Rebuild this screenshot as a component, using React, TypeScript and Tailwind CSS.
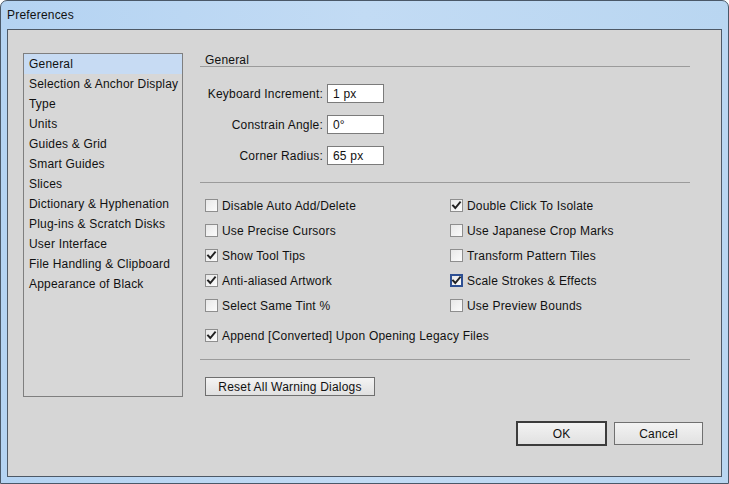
import React from "react";

const sidebarItems = [
  "General",
  "Selection & Anchor Display",
  "Type",
  "Units",
  "Guides & Grid",
  "Smart Guides",
  "Slices",
  "Dictionary & Hyphenation",
  "Plug-ins & Scratch Disks",
  "User Interface",
  "File Handling & Clipboard",
  "Appearance of Black",
];

function Check({ checked, focused }: { checked?: boolean; focused?: boolean }) {
  return (
    <span
      className={
        "flex h-[13px] w-[13px] shrink-0 items-center justify-center bg-gradient-to-br from-[#e8e8e8] to-[#fbfbfb] " +
        (focused ? "border-2 border-[#2d4f93]" : "border border-[#8e8e8e]")
      }
    >
      {checked && (
        <svg width="11" height="11" viewBox="0 0 11 11" className={focused ? "-m-[1px]" : ""}>
          <path d="M2 5.5 L4.3 8 L9 2.3" fill="none" stroke="#222" strokeWidth="1.9" strokeLinecap="square" />
        </svg>
      )}
    </span>
  );
}

function CheckRow({ label, checked, focused }: { label: string; checked?: boolean; focused?: boolean }) {
  return (
    <div className="flex h-[25px] items-center gap-[4px]">
      <Check checked={checked} focused={focused} />
      <span className="pt-[1px]">{label}</span>
    </div>
  );
}

function Field({ label, value }: { label: string; value: string }) {
  return (
    <div className="flex h-[19px] items-center gap-[4px]">
      <span className="w-[118px] text-right">{label}</span>
      <div className="flex h-[19px] w-[57px] items-center border border-[#7b7b7b] bg-white pl-[5px]">{value}</div>
    </div>
  );
}

export default function App() {
  return (
    <div className="flex h-[484px] w-[729px] flex-col overflow-hidden rounded-t-[7px] border border-[#4a5868] bg-gradient-to-r from-[#b4d3f2] via-[#c2dbf4] to-[#b9d6f1] font-['Liberation_Sans',Arial,sans-serif] text-[12px] tracking-[0.2px] text-[#111]">
      <div className="flex h-[28px] shrink-0 items-center pl-[6px] text-[12px] text-[#111]">Preferences</div>
      <div className="mx-[6px] mb-[6px] flex flex-1 flex-col border border-[#4e5966] bg-[#d6d6d6]">
        <div className="flex pl-[15px] pt-[23px]">
          <div className="h-[344px] w-[160px] border border-[#7f7f7f] bg-[#d7d7d7]">
            {sidebarItems.map((it, i) => (
              <div
                key={it}
                className={"flex h-[20px] items-center pl-[5px] " + (i === 0 ? "bg-[#c7dbf3]" : "")}
              >
                {it}
              </div>
            ))}
          </div>
          <div className="ml-[17px] w-[490px]">
            <div className="flex h-[14px] items-center border-b border-[#9b9b9b] pl-[5px]">General</div>
            <div className="mt-[17px] flex flex-col gap-[12px] pl-[5px]">
              <Field label="Keyboard Increment:" value="1 px" />
              <Field label="Constrain Angle:" value="0°" />
              <Field label="Corner Radius:" value="65 px" />
            </div>
            <div className="mt-[17px] border-b border-[#9b9b9b]" />
            <div className="mt-[10px] grid grid-cols-[245px_1fr] pl-[5px]">
              <CheckRow label="Disable Auto Add/Delete" />
              <CheckRow label="Double Click To Isolate" checked />
              <CheckRow label="Use Precise Cursors" />
              <CheckRow label="Use Japanese Crop Marks" />
              <CheckRow label="Show Tool Tips" checked />
              <CheckRow label="Transform Pattern Tiles" />
              <CheckRow label="Anti-aliased Artwork" checked />
              <CheckRow label="Scale Strokes & Effects" checked focused />
              <CheckRow label="Select Same Tint %" />
              <CheckRow label="Use Preview Bounds" />
            </div>
            <div className="mt-[5px] pl-[5px]">
              <CheckRow label="Append [Converted] Upon Opening Legacy Files" checked />
            </div>
            <div className="mt-[11px] border-b border-[#9b9b9b]" />
            <div className="mt-[17px] pl-[5px]">
              <button className="flex h-[19px] w-[170px] items-center justify-center border border-[#6f6f6f] bg-gradient-to-b from-[#f4f4f4] to-[#e0e0e0]">
                Reset All Warning Dialogs
              </button>
            </div>
          </div>
        </div>
        <div className="mt-[24px] flex items-center pl-[508px]">
          <button className="flex h-[25px] w-[91px] items-center justify-center border-2 border-[#3c3c3c] bg-gradient-to-b from-[#f3f3f3] to-[#e1e1e1]">
            OK
          </button>
          <button className="ml-[7px] flex h-[23px] w-[89px] items-center justify-center border border-[#707070] bg-gradient-to-b from-[#f3f3f3] to-[#e1e1e1]">
            Cancel
          </button>
        </div>
      </div>
    </div>
  );
}
